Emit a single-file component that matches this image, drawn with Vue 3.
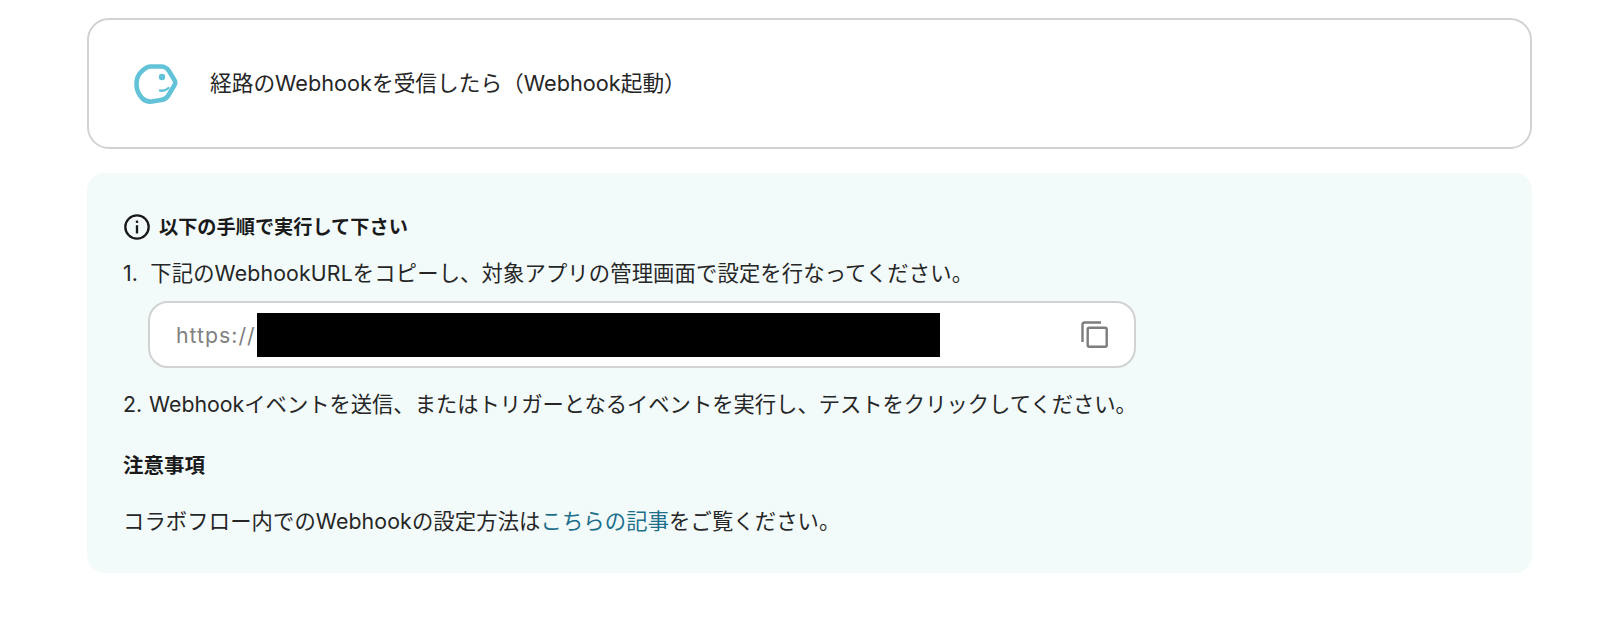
<template>
  <div class="page">
    <div class="trigger-card">
      <svg class="trigger-icon" viewBox="0 0 44 40" width="44" height="40">
        <path d="M17 2.500H27C31 2.500 33 4 35 7L40.500 16C41.500 18 41.500 19.500 40.500 21L34 32C32.500 34.500 30 35.500 27 36L18 37.500C14 38 11 37 8.500 34.500C4.500 30.500 2.500 26 2.500 20C2.500 14 4.500 10 8 7C11 4 13.500 2.500 17 2.500Z" fill="none" stroke="#62c3d8" stroke-width="4.600" />
        <circle cx="28" cy="13" r="3.200" fill="#62c3d8" />
        <path d="M26 26.500Q31 27.500 34.500 24" fill="none" stroke="#62c3d8" stroke-width="2.400" stroke-linecap="round" />
      </svg>
      <span class="trigger-title">経路のWebhookを受信したら（Webhook起動）</span>
    </div>

    <div class="guide">
      <h2 class="guide-title">
        <svg viewBox="0 0 24 24" width="28" height="28">
          <circle cx="12" cy="12" r="10" fill="none" stroke="#1a1a1a" stroke-width="2" />
          <rect x="11" y="10.500" width="2" height="7" fill="#1a1a1a" />
          <rect x="11" y="6.500" width="2" height="2" fill="#1a1a1a" />
        </svg>
        以下の手順で実行して下さい
      </h2>
      <p class="step step-one">1. 下記のWebhookURLをコピーし、対象アプリの管理画面で設定を行なってください。</p>
      <div class="url-box">
        <span class="url-text">https://</span>
        <span class="url-mask"></span>
        <svg class="copy-icon" viewBox="0 0 27 27" width="27" height="27">
          <path d="M20 1.500H3.500Q1.500 1.500 1.500 3.500V21" fill="none" stroke="#7d7d7d" stroke-width="2.400" />
          <rect x="6.700" y="6.700" width="19" height="19" rx="1.500" fill="none" stroke="#7d7d7d" stroke-width="2.400" />
        </svg>
      </div>
      <p class="step step-two">2. Webhookイベントを送信、またはトリガーとなるイベントを実行し、テストをクリックしてください。</p>
      <h3 class="note-title">注意事項</h3>
      <p class="note">コラボフロー内でのWebhookの設定方法は<a class="link">こちらの記事</a>をご覧ください。</p>
    </div>
  </div>
</template>

<script setup>
</script>

<style>
html,
body {
  background: #fff;
}
</style>

<style scoped>
.page {
  padding: 18px 68px 0 87px;
  font-family: Inter, "Noto Sans CJK JP", sans-serif;
  font-size: 21.300px;
  color: #262626;
}

.trigger-card {
  display: flex;
  align-items: center;
  height: 131px;
  box-sizing: border-box;
  padding-left: 45px;
  border: 2px solid #d2d2d2;
  border-radius: 22px;
}

.trigger-title {
  margin: 0 0 4px 32px;
  font-size: 21.700px;
}

.guide {
  margin-top: 24px;
  height: 400px;
  box-sizing: border-box;
  padding: 40px 36px 0;
  background: #f2fafa;
  border-radius: 18px;
}

.guide-title {
  display: flex;
  align-items: center;
  gap: 8px;
  margin: 0;
  font-size: 19.200px;
  font-weight: 700;
  line-height: 27px;
  color: #1a1a1a;
}

.step {
  margin: 0;
  line-height: 30px;
}

.step-one {
  margin-top: 17px;
  word-spacing: 6px;
  letter-spacing: 0.150px;
}

.step-two {
  word-spacing: 1px;
}

.url-box {
  display: flex;
  align-items: center;
  width: 988px;
  height: 67px;
  box-sizing: border-box;
  margin: 13px 0 21px 25px;
  padding: 0 26px 0 26px;
  background: #fff;
  border: 2px solid #d2d2d2;
  border-radius: 20px;
}

.url-text {
  color: #808080;
  letter-spacing: 1px;
}

.url-mask {
  width: 683px;
  height: 44px;
  margin-left: 1px;
  background: #000;
}

.copy-icon {
  margin-left: auto;
}

.note-title {
  margin: 32px 0 0;
  font-size: 20.500px;
  font-weight: 700;
  line-height: 30px;
  color: #1a1a1a;
}

.note {
  margin: 25px 0 0;
  line-height: 30px;
  letter-spacing: 0.130px;
}

.link {
  color: #1d6f8a;
}
</style>
